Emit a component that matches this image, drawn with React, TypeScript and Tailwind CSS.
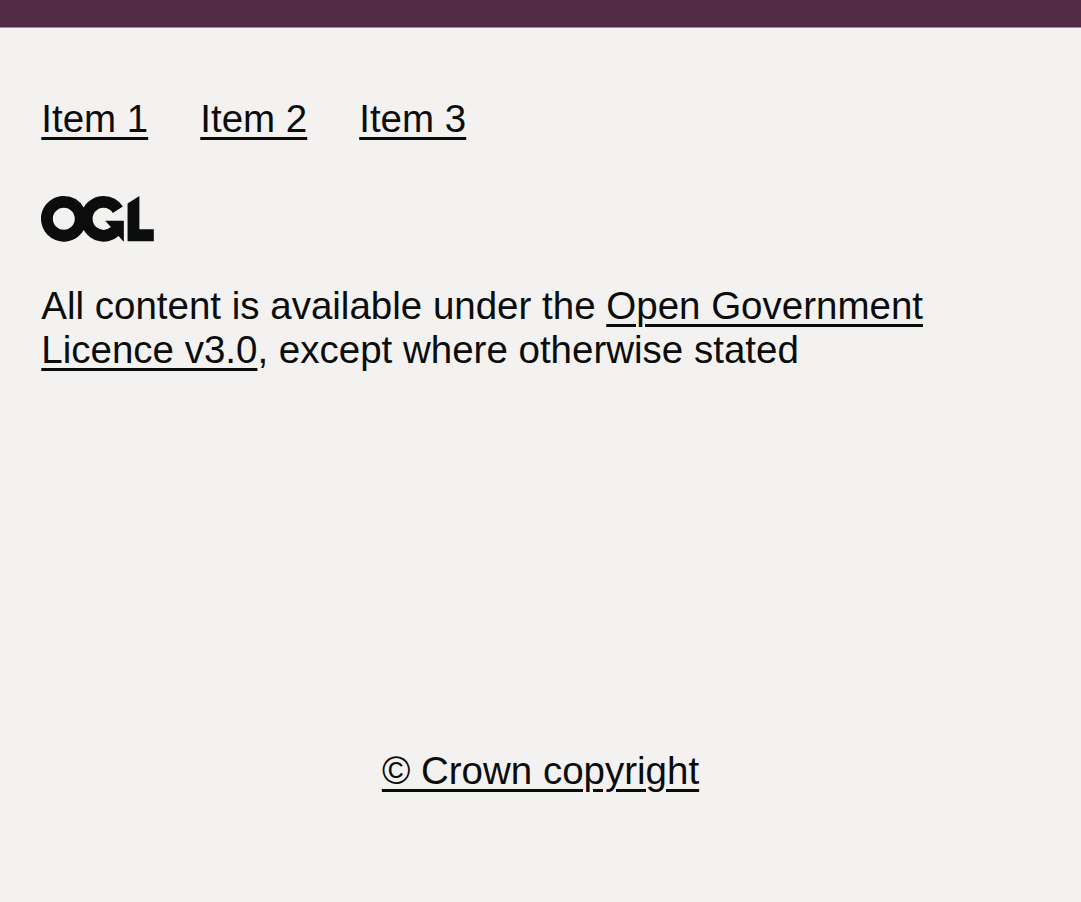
const link = "underline decoration-[2.75px] underline-offset-[5px]";

export default function App() {
  return (
    <footer className="h-[902px] w-[1081px] overflow-hidden bg-[#f3f2f1] font-['Liberation_Sans',Arial,sans-serif] text-[38.5px] leading-[44px] text-[#0b0c0c]">
      <div className="h-7 border-b border-[#a38e9b] bg-[#532a45]" />
      <div className="px-[41.25px] pt-[69px]">
        <ul className="flex gap-[52px]">
          <li><a href="#" className={link}>Item 1</a></li>
          <li><a href="#" className={link}>Item 2</a></li>
          <li><a href="#" className={link}>Item 3</a></li>
        </ul>
        <svg className="mt-[55px] block h-[45.7px] w-[112.8px]" viewBox="0 0 483.2 195.7" fill="currentColor" aria-hidden="true">
          <path d="M421.5 142.8V.1l-50.7 32.3v161.1h112.4v-50.7zm-122.3-9.6A47.12 47.12 0 0 1 221 97.8c0-26 21.1-47.1 47.1-47.1 16.7 0 31.4 8.7 39.7 21.8l42.7-27.2A97.63 97.63 0 0 0 268.1 0c-36.5 0-68.3 20.1-85.1 49.7A98 98 0 0 0 97.8 0C43.9 0 0 43.9 0 97.8s43.9 97.8 97.8 97.8c36.5 0 68.3-20.1 85.1-49.7a97.76 97.76 0 0 0 149.6 25.4l19.4 22.2h3v-87.8h-80l24.3 27.5zM97.8 145c-26 0-47.1-21.1-47.1-47.1s21.1-47.1 47.1-47.1 47.1 21.1 47.1 47.1S123.8 145 97.8 145" />
        </svg>
        <p className="mt-[42.3px] w-[940px]">
          All content is available under the <a href="#" className={link}>Open Government Licence v3.0</a>, except where otherwise stated
        </p>
        <p className="mt-[377px] text-center">
          <a href="#" className={link}>© Crown copyright</a>
        </p>
      </div>
    </footer>
  );
}
